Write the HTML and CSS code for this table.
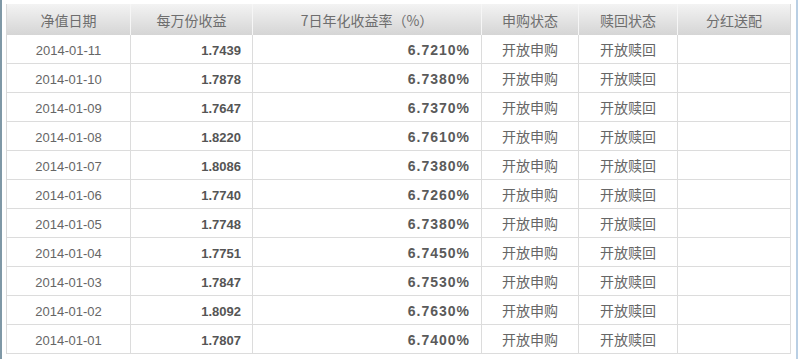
FILE: index.html
```html
<!DOCTYPE html>
<html lang="zh-CN">
<head>
<meta charset="utf-8">
<title>收益表</title>
<link rel="stylesheet" href="styles.css">
</head>
<body>
<div class="page">
  <div class="stripe-left"></div>
  <div class="wrap">
    <table class="nav-table">
      <thead>
        <tr>
          <th class="c1">净值日期</th>
          <th class="c2">每万份收益</th>
          <th class="c3">7日年化收益率（%）</th>
          <th class="c4">申购状态</th>
          <th class="c5">赎回状态</th>
          <th class="c6">分红送配</th>
        </tr>
      </thead>
      <tbody>
        <tr><td class="date">2014-01-11</td><td class="num">1.7439</td><td class="pct">6.7210%</td><td class="st">开放申购</td><td class="st">开放赎回</td><td></td></tr>
        <tr><td class="date">2014-01-10</td><td class="num">1.7878</td><td class="pct">6.7380%</td><td class="st">开放申购</td><td class="st">开放赎回</td><td></td></tr>
        <tr><td class="date">2014-01-09</td><td class="num">1.7647</td><td class="pct">6.7370%</td><td class="st">开放申购</td><td class="st">开放赎回</td><td></td></tr>
        <tr><td class="date">2014-01-08</td><td class="num">1.8220</td><td class="pct">6.7610%</td><td class="st">开放申购</td><td class="st">开放赎回</td><td></td></tr>
        <tr><td class="date">2014-01-07</td><td class="num">1.8086</td><td class="pct">6.7380%</td><td class="st">开放申购</td><td class="st">开放赎回</td><td></td></tr>
        <tr><td class="date">2014-01-06</td><td class="num">1.7740</td><td class="pct">6.7260%</td><td class="st">开放申购</td><td class="st">开放赎回</td><td></td></tr>
        <tr><td class="date">2014-01-05</td><td class="num">1.7748</td><td class="pct">6.7380%</td><td class="st">开放申购</td><td class="st">开放赎回</td><td></td></tr>
        <tr><td class="date">2014-01-04</td><td class="num">1.7751</td><td class="pct">6.7450%</td><td class="st">开放申购</td><td class="st">开放赎回</td><td></td></tr>
        <tr><td class="date">2014-01-03</td><td class="num">1.7847</td><td class="pct">6.7530%</td><td class="st">开放申购</td><td class="st">开放赎回</td><td></td></tr>
        <tr><td class="date">2014-01-02</td><td class="num">1.8092</td><td class="pct">6.7630%</td><td class="st">开放申购</td><td class="st">开放赎回</td><td></td></tr>
        <tr><td class="date">2014-01-01</td><td class="num">1.7807</td><td class="pct">6.7400%</td><td class="st">开放申购</td><td class="st">开放赎回</td><td></td></tr>
      </tbody>
    </table>
  </div>
  <div class="stripe-right"></div>
</div>
</body>
</html>
```
FILE: styles.css
```css
html, body {
  margin: 0;
  padding: 0;
  background: #ffffff;
}
body {
  width: 800px;
  height: 359px;
  overflow: hidden;
  font-family: "Noto Sans CJK SC", "Liberation Sans", sans-serif;
}
.page {
  display: flex;
  height: 359px;
}
.stripe-left {
  width: 2px;
  background: #7f98a6;
  flex: none;
}
.wrap {
  padding: 4px 0 0 4px;
  flex: none;
}
.stripe-right {
  width: 2px;
  margin-left: 5px;
  background: #b9cfe4;
  flex: none;
}
.nav-table {
  width: 785px;
  table-layout: fixed;
  border-collapse: separate;
  border-spacing: 0;
  border-left: 1px solid #d8d8d8;
}
.nav-table th,
.nav-table td {
  box-sizing: border-box;
  padding: 0;
  white-space: nowrap;
  overflow: hidden;
}
.nav-table th {
  height: 31px;
  background: linear-gradient(#f3f3f3, #d5d5d5);
  border-right: 1px solid #f6f6f6;
  color: #6e6e6e;
  font-size: 14px;
  font-weight: normal;
  text-align: center;
  line-height: 30px;
}
.nav-table th.c6 {
  border-right: 1px solid #d8d8d8;
}
.c1 { width: 124px; }
.c2 { width: 122px; }
.c3 { width: 229px; }
.c4 { width: 97px; }
.c5 { width: 99px; }
.c6 { width: 113px; }
.nav-table td {
  height: 29px;
  border-right: 1px solid #dcdcdc;
  border-bottom: 1px solid #dcdcdc;
  color: #666666;
}
.nav-table td.date,
.nav-table td.num,
.nav-table td.pct {
  padding-top: 2px;
}
.date {
  font-family: "Liberation Sans", sans-serif;
  font-size: 13px;
  text-align: center;
  color: #6e6e6e;
}
.nav-table td.num {
  font-family: "Liberation Sans", sans-serif;
  font-size: 13px;
  font-weight: bold;
  text-align: right;
  padding-right: 11px;
  color: #555555;
}
.nav-table td.pct {
  font-family: "Liberation Sans", sans-serif;
  font-size: 14px;
  font-weight: bold;
  letter-spacing: 1px;
  text-align: right;
  padding-right: 11px;
  color: #5a5a5a;
}
.st {
  font-size: 14px;
  text-align: center;
  color: #626262;
}
```
